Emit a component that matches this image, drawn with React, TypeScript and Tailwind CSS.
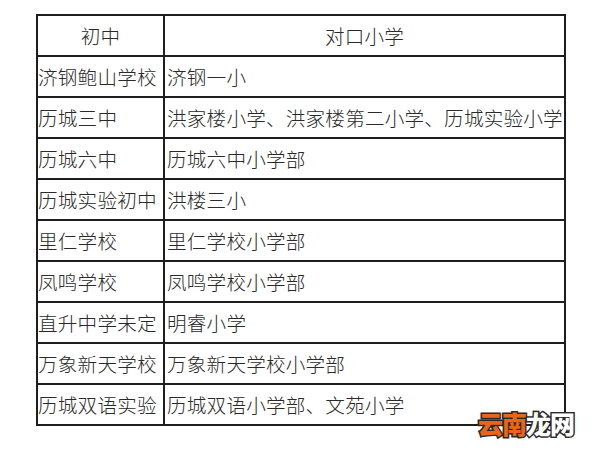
import React from "react";

const rows: [string, string][] = [
  ["济钢鲍山学校", "济钢一小"],
  ["历城三中", "洪家楼小学、洪家楼第二小学、历城实验小学"],
  ["历城六中", "历城六中小学部"],
  ["历城实验初中", "洪楼三小"],
  ["里仁学校", "里仁学校小学部"],
  ["凤鸣学校", "凤鸣学校小学部"],
  ["直升中学未定", "明睿小学"],
  ["万象新天学校", "万象新天学校小学部"],
  ["历城双语实验", "历城双语小学部、文苑小学"],
];

export default function App() {
  return (
    <div
      className="relative w-[612px] h-[453px] bg-white overflow-hidden"
      style={{ fontFamily: '"Noto Sans CJK SC", "Noto Sans", sans-serif' }}
    >
      <div className="pt-[14px] pl-[36px]">
        <table className="border-collapse text-[19.6px] leading-none text-[#2a2a2a] font-light tracking-[0.2px]">
          <tbody>
            <tr className="h-[41px]">
              <td className="w-[127px] border-2 border-[#1e1e1e] text-center p-0">初中</td>
              <td className="w-[401px] border-2 border-[#1e1e1e] text-center p-0">对口小学</td>
            </tr>
            {rows.map(([a, b]) => (
              <tr key={a} className="h-[41px]">
                <td className="border-2 border-[#1e1e1e] pl-0 pr-0 py-0 whitespace-nowrap">{a}</td>
                <td className="border-2 border-[#1e1e1e] pl-[2px] pr-0 py-0 whitespace-nowrap">{b}</td>
              </tr>
            ))}
          </tbody>
        </table>
      </div>
      <div
        className="absolute left-[478px] top-[411px] flex text-[25px] leading-none font-black tracking-[-1px]"
        style={{ WebkitTextStroke: "3px #2a2a2a", paintOrder: "stroke fill" }}
      >
        <span className="text-[#e8651a]">云南</span>
        <span className="text-white">龙网</span>
      </div>
    </div>
  );
}
